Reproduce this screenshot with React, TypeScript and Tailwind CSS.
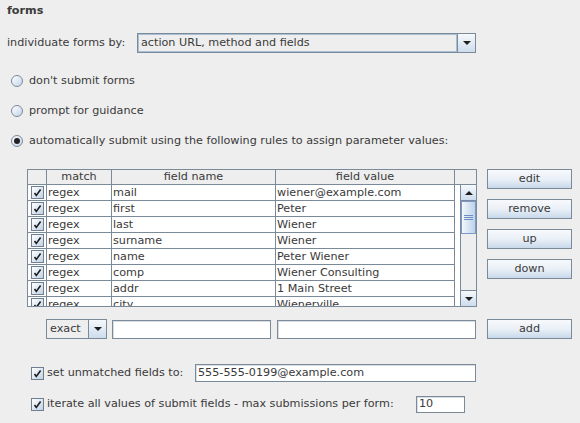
import React from 'react';

const ROWS = [
  ['mail', 'wiener@example.com'],
  ['first', 'Peter'],
  ['last', 'Wiener'],
  ['surname', 'Wiener'],
  ['name', 'Peter Wiener'],
  ['comp', 'Wiener Consulting'],
  ['addr', '1 Main Street'],
  ['city', 'Wienerville'],
];

function Check() {
  return (
    <span className="w-[13px] h-[13px] border border-[#6f7f8f] bg-gradient-to-br from-[#ffffff] to-[#bfd2e6] flex items-center justify-center shrink-0">
      <svg width="9" height="9" viewBox="0 0 9 9">
        <path d="M1.5 5 L3.3 7.4 L7.6 1.6" stroke="#1e1e1e" strokeWidth="1.6" fill="none" />
      </svg>
    </span>
  );
}

function Radio({ on }: { on?: boolean }) {
  return (
    <span className="w-[12px] h-[12px] rounded-full border border-[#7a8a99] bg-gradient-to-br from-[#ffffff] to-[#c3d5e8] flex items-center justify-center shrink-0">
      {on && <span className="w-[6px] h-[6px] rounded-full bg-[#222]" />}
    </span>
  );
}

function Arrow({ up }: { up?: boolean }) {
  return (
    <svg width="8" height="4" viewBox="0 0 8 4">
      <path d={up ? 'M0 4 H8 L4 0 Z' : 'M0 0 H8 L4 4 Z'} fill="#1e1e1e" />
    </svg>
  );
}

function Combo({ w, label, focus }: { w: string; label: string; focus?: boolean }) {
  return (
    <div className={`${w} h-[20px] border border-[#7a8a99] flex bg-[#eeeeee]`}>
      <div className={`flex-1 flex items-center pl-[3px] ${focus ? 'shadow-[inset_0_0_0_1px_#a9bfd6]' : ''}`}>{label}</div>
      <div className="w-[18px] border-l border-[#7a8a99] bg-gradient-to-b from-[#f6f9fc] to-[#cddcec] flex items-center justify-center">
        <Arrow />
      </div>
    </div>
  );
}

function Btn({ children, cls = '' }: { children: React.ReactNode; cls?: string }) {
  return (
    <div className={`w-[85px] h-[20px] border border-[#7a8a99] bg-gradient-to-b from-[#f7f9fc] via-[#eaf0f7] to-[#c8d9ea] flex items-center justify-center ${cls}`}>
      {children}
    </div>
  );
}

function Field({ cls, value = '' }: { cls: string; value?: string }) {
  return <div className={`${cls} border border-[#7a8a99] bg-white flex items-center pl-[2px] shadow-[inset_1px_1px_0_#d8dee4]`}>{value}</div>;
}

export default function App() {
  return (
    <div className="w-[580px] h-[423px] bg-[#eeeeee] text-[#3a3a3a] text-[11.2px] font-['DejaVu_Sans',sans-serif] overflow-hidden">
      <div className="pl-[7px] pt-[4px] h-[17px] leading-[14px] font-bold">forms</div>

      <div className="mt-[16px] flex items-center h-[20px] pl-[7px]">
        <span className="w-[130px]">individuate forms by:</span>
        <Combo w="w-[339px]" label="action URL, method and fields" focus />
      </div>

      <div className="mt-[21px] h-[14px] flex items-center pl-[11px] gap-[6px]"><Radio /><span>don't submit forms</span></div>
      <div className="mt-[16px] h-[14px] flex items-center pl-[11px] gap-[6px]"><Radio /><span>prompt for guidance</span></div>
      <div className="mt-[16px] h-[14px] flex items-center pl-[11px] gap-[6px]"><Radio on /><span>automatically submit using the following rules to assign parameter values:</span></div>

      <div className="mt-[21px] flex pl-[27px]">
        <div className="w-[450px] h-[138px] border border-[#7a8a99] flex bg-white">
          <div className="w-[427px] flex flex-col">
            <div className="h-[15px] flex bg-[#eeeeee] border-b border-[#7a8a99] leading-[14px]">
              <div className="w-[19px] border-r border-[#7a8a99]" />
              <div className="w-[65px] border-r border-[#7a8a99] text-center">match</div>
              <div className="w-[164px] border-r border-[#7a8a99] text-center">field name</div>
              <div className="w-[179px] border-r border-[#7a8a99] text-center">field value</div>
            </div>
            <div className="flex-1 overflow-hidden">
              {ROWS.map(([n, v]) => (
                <div key={n} className="h-[16px] flex border-b border-[#7a8a99]">
                  <div className="w-[19px] border-r border-[#7a8a99] flex items-center pl-[3px]"><Check /></div>
                  <div className="w-[65px] border-r border-[#7a8a99] pl-[1px] leading-[15px]">regex</div>
                  <div className="w-[164px] border-r border-[#7a8a99] pl-[1px] leading-[15px]">{n}</div>
                  <div className="w-[179px] border-r border-[#7a8a99] pl-[1px] leading-[15px]">{v}</div>
                </div>
              ))}
            </div>
          </div>
          <div className="flex-1 flex flex-col">
            <div className="h-[15px] bg-[#eeeeee] border-b border-[#7a8a99]" />
            <div className="flex-1 flex">
              <div className="w-[5px] bg-white" />
              <div className="flex-1 flex flex-col bg-[#eeeeee] border-l border-[#7a8a99]">
                <div className="h-[16px] border-b border-[#7a8a99] bg-gradient-to-b from-[#f6f9fc] to-[#cddcec] flex items-center justify-center"><Arrow up /></div>
                <div className="h-[33px] border border-[#7d98c8] bg-gradient-to-r from-[#f2f7fc] to-[#bcd2ea] flex flex-col items-center justify-center gap-[1px]">
                  <span className="w-[9px] h-[1px] bg-[#6d8fc4]" />
                  <span className="w-[9px] h-[1px] bg-[#6d8fc4]" />
                  <span className="w-[9px] h-[1px] bg-[#6d8fc4]" />
                </div>
                <div className="flex-1" />
                <div className="h-[16px] border-t border-[#7a8a99] bg-gradient-to-b from-[#f6f9fc] to-[#cddcec] flex items-center justify-center"><Arrow /></div>
              </div>
            </div>
          </div>
        </div>
        <div className="ml-[10px] flex flex-col gap-[10px]">
          <Btn>edit</Btn>
          <Btn>remove</Btn>
          <Btn>up</Btn>
          <Btn>down</Btn>
        </div>
      </div>

      <div className="mt-[12px] flex items-center h-[20px] pl-[46px]">
        <Combo w="w-[61px]" label="exact" />
        <Field cls="ml-[5px] w-[159px] h-[19px]" />
        <Field cls="ml-[6px] w-[199px] h-[19px]" />
        <Btn cls="ml-[11px]">add</Btn>
      </div>

      <div className="mt-[25px] flex items-center h-[18px] pl-[31px]">
        <Check />
        <span className="ml-[3px] w-[148px]">set unmatched fields to:</span>
        <Field cls="w-[281px] h-[18px]" value="555-555-0199@example.com" />
      </div>

      <div className="mt-[14px] flex items-center h-[17px] pl-[31px]">
        <Check />
        <span className="ml-[3px] w-[369px]">iterate all values of submit fields - max submissions per form:</span>
        <Field cls="w-[49px] h-[17px]" value="10" />
      </div>
    </div>
  );
}
